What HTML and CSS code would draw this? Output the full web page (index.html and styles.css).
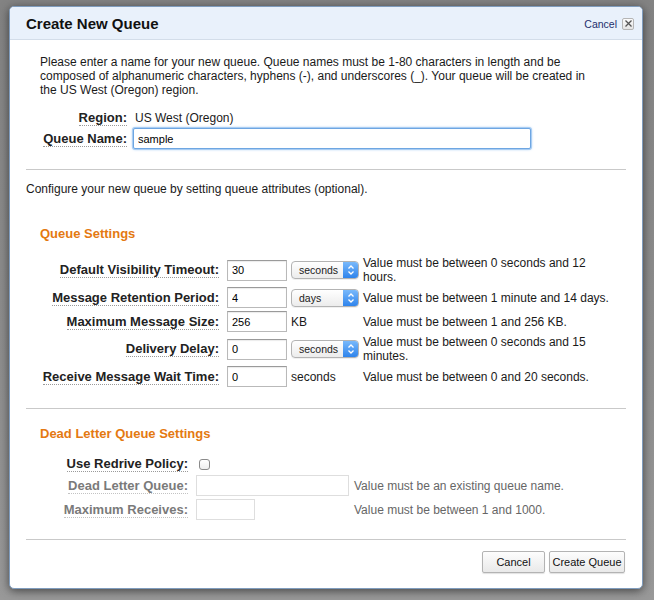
FILE: index.html
```html
<!DOCTYPE html>
<html>
<head>
<meta charset="utf-8">
<link rel="stylesheet" href="styles.css">
</head>
<body>
<div class="dialog">
  <div class="dlg-head">
    <h1 class="dlg-title">Create New Queue</h1>
    <div class="dlg-close"><span class="close-text">Cancel</span><span class="close-x"><svg width="7" height="7" viewBox="0 0 7 7"><path d="M0.5 0.5L6.5 6.5M6.5 0.5L0.5 6.5" stroke="#555" stroke-width="1.3"/></svg></span></div>
  </div>
  <div class="dlg-body">
    <p class="intro-text">Please enter a name for your new queue. Queue names must be 1-80 characters in length and be composed of alphanumeric characters, hyphens (-), and underscores (_). Your queue will be created in the US West (Oregon) region.</p>
    <div class="kv-grid">
      <span class="lbl">Region:</span><span class="val">US West (Oregon)</span>
      <span class="lbl">Queue Name:</span><input class="txt txt-name" type="text" value="sample">
    </div>
    <hr class="sep sep-1">
    <p class="config-text">Configure your new queue by setting queue attributes (optional).</p>

    <h2 class="group-title">Queue Settings</h2>
    <div class="attr-grid">
      <span class="lbl">Default Visibility Timeout:</span>
      <input class="txt txt-num" type="text" value="30">
      <div class="select"><span class="select-text">seconds</span><span class="select-arrow"><svg width="8" height="12" viewBox="0 0 8 12"><path d="M1.5 4.5L4 2L6.5 4.5M1.5 7.5L4 10L6.5 7.5" fill="none" stroke="#fff" stroke-width="1.3"/></svg></span></div>
      <span class="help">Value must be between 0 seconds and 12 hours.</span>

      <span class="lbl">Message Retention Period:</span>
      <input class="txt txt-num" type="text" value="4">
      <div class="select"><span class="select-text">days</span><span class="select-arrow"><svg width="8" height="12" viewBox="0 0 8 12"><path d="M1.5 4.5L4 2L6.5 4.5M1.5 7.5L4 10L6.5 7.5" fill="none" stroke="#fff" stroke-width="1.3"/></svg></span></div>
      <span class="help">Value must be between 1 minute and 14 days.</span>

      <span class="lbl">Maximum Message Size:</span>
      <input class="txt txt-num" type="text" value="256">
      <span class="unit">KB</span>
      <span class="help">Value must be between 1 and 256 KB.</span>

      <span class="lbl">Delivery Delay:</span>
      <input class="txt txt-num" type="text" value="0">
      <div class="select"><span class="select-text">seconds</span><span class="select-arrow"><svg width="8" height="12" viewBox="0 0 8 12"><path d="M1.5 4.5L4 2L6.5 4.5M1.5 7.5L4 10L6.5 7.5" fill="none" stroke="#fff" stroke-width="1.3"/></svg></span></div>
      <span class="help">Value must be between 0 seconds and 15 minutes.</span>

      <span class="lbl">Receive Message Wait Time:</span>
      <input class="txt txt-num" type="text" value="0">
      <span class="unit">seconds</span>
      <span class="help">Value must be between 0 and 20 seconds.</span>
    </div>
    <hr class="sep sep-2">

    <h2 class="group-title group-title-dlq">Dead Letter Queue Settings</h2>
    <div class="dlq-grid">
      <span class="lbl">Use Redrive Policy:</span>
      <span class="check"></span>
      <span></span>

      <span class="lbl lbl-off">Dead Letter Queue:</span>
      <input class="txt txt-off txt-dlq" type="text" value="">
      <span class="help help-off">Value must be an existing queue name.</span>

      <span class="lbl lbl-off">Maximum Receives:</span>
      <input class="txt txt-off txt-max" type="text" value="">
      <span class="help help-off">Value must be between 1 and 1000.</span>
    </div>
    <hr class="sep sep-3">
    <div class="actions">
      <button class="btn btn-cancel" type="button">Cancel</button>
      <button class="btn btn-create" type="button">Create Queue</button>
    </div>
  </div>
</div>
</body>
</html>
```

FILE: styles.css
```css
html, body {
  margin: 0;
  padding: 0;
}
body {
  width: 654px;
  height: 600px;
  overflow: hidden;
  background: linear-gradient(#838383, #8e8e8e 60%, #999 100%);
  font-family: "Liberation Sans", Arial, sans-serif;
  color: #1a1a1a;
}
.dialog {
  margin: 6px 0 0 9px;
  width: 632px;
  height: 581px;
  background: #fff;
  border: 1px solid #7f9cbd;
  border-radius: 5px;
  box-shadow: 0 2px 10px rgba(0, 0, 0, 0.55);
  overflow: hidden;
  box-sizing: content-box;
}
.dlg-head {
  height: 32px;
  background: #e9f1fb;
  border-bottom: 1px solid #d3dde9;
  display: flex;
  align-items: center;
  justify-content: space-between;
  padding: 0 8px 0 16px;
}
.dlg-title {
  margin: 0;
  font-size: 15px;
  font-weight: bold;
  color: #111;
  padding-top: 1px;
}
.dlg-close {
  display: flex;
  align-items: center;
  gap: 5px;
  padding-top: 1px;
}
.close-text {
  font-size: 10.5px;
  color: #1d2f6b;
}
.close-x {
  width: 10px;
  height: 10px;
  border: 1px solid #b5b5b5;
  border-radius: 2px;
  background: linear-gradient(#fbfbfb, #e4e4e4);
  display: flex;
  align-items: center;
  justify-content: center;
}
.dlg-body {
  padding: 0 16px;
}
.intro-text {
  margin: 15px 0 0 14px;
  font-size: 12px;
  line-height: 14px;
  width: 560px;
}
.lbl {
  justify-self: end;
  margin-right: 4px;
  font-size: 13px;
  font-weight: bold;
  line-height: 15px;
  color: #222;
  border-bottom: 1px dotted #9a9a9a;
}
.kv-grid {
  margin-top: 13px;
  display: grid;
  grid-template-columns: 105px 400px;
  column-gap: 2px;
  row-gap: 2px;
  align-items: center;
}
.val {
  font-size: 12px;
  padding-left: 2px;
}
.txt {
  box-sizing: border-box;
  height: 21px;
  border: 1px solid #b9b9b9;
  border-top-color: #9a9a9a;
  background: #fff;
  font-family: "Liberation Sans", Arial, sans-serif;
  font-size: 11px;
  color: #000;
  padding: 0 4px;
  margin: 0;
  outline: none;
  box-shadow: inset 0 1px 1px rgba(0, 0, 0, 0.08);
}
.txt-name {
  width: 398px;
  height: 21px;
  border: 1px solid #6ea6e2;
  border-radius: 2px;
  box-shadow: 0 0 0 1px #a9cdf3, 0 0 3px #6aa8ea;
}
.sep {
  border: 0;
  border-top: 1px solid #c9c9c9;
  margin: 0;
  height: 0;
}
.sep-1 { margin-top: 20px; }
.config-text {
  margin: 12px 0 0 0;
  font-size: 12px;
  line-height: 14px;
}
.group-title {
  margin: 30px 0 0 14px;
  font-size: 13px;
  font-weight: bold;
  line-height: 16px;
  color: #e47911;
}
.attr-grid {
  margin-top: 14px;
  display: grid;
  grid-template-columns: 197px 60px 68px 250px;
  column-gap: 4px;
  row-gap: 3px;
  align-items: center;
}
.txt-num {
  width: 60px;
}
.unit {
  font-size: 12px;
}
.help {
  font-size: 12px;
  line-height: 14px;
}
.select {
  box-sizing: border-box;
  width: 68px;
  height: 18px;
  border: 1px solid #b3b3b3;
  border-radius: 4px;
  background: linear-gradient(#ffffff, #ececec);
  display: flex;
  align-items: center;
  justify-content: space-between;
  overflow: hidden;
  box-shadow: 0 1px 0 rgba(0, 0, 0, 0.06);
}
.select-text {
  font-size: 10.5px;
  padding-left: 7px;
  color: #222;
}
.select-arrow {
  width: 15px;
  height: 16px;
  background: linear-gradient(#79b9fb, #2f84ec);
  display: flex;
  align-items: center;
  justify-content: center;
}
.sep-2 { margin-top: 21px; }
.group-title-dlq {
  margin-top: 17px;
}
.dlq-grid {
  margin-top: 14px;
  display: grid;
  grid-template-columns: 166px 153px 250px;
  column-gap: 4px;
  row-gap: 3px;
  align-items: center;
}
.dlq-grid .help {
  margin-left: 1px;
}
.check {
  width: 9px;
  height: 9px;
  margin-left: 3px;
  border: 1px solid #8a8a8a;
  border-radius: 3px;
  background: linear-gradient(#fff, #eee);
}
.lbl-off {
  color: #7a7a7a;
  border-bottom-color: #c3c3c3;
}
.txt-off {
  border: 1px solid #dedede;
  box-shadow: none;
}
.txt-dlq { width: 153px; }
.txt-max { width: 59px; }
.help-off {
  color: #666;
}
.sep-3 { margin-top: 19px; }
.actions {
  margin-top: 11px;
  display: flex;
  justify-content: flex-end;
  gap: 4px;
  padding-right: 1px;
}
.btn {
  height: 22px;
  border: 1px solid #b3b3b3;
  border-radius: 2px;
  background: linear-gradient(#fdfdfd, #e9e9e9);
  font-family: "Liberation Sans", Arial, sans-serif;
  font-size: 11px;
  color: #111;
  padding: 0;
  margin: 0;
  box-shadow: 0 1px 1px rgba(0, 0, 0, 0.12);
}
.btn-cancel { width: 63px; }
.btn-create { width: 76px; }
```
